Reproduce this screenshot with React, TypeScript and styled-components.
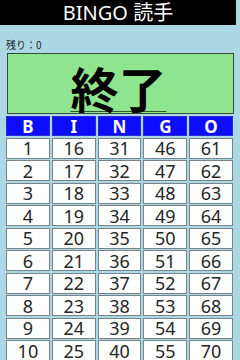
import React from 'react';
import styled, {createGlobalStyle} from 'styled-components';

const GlobalStyle = createGlobalStyle`
  html, body {
    margin: 0;
    padding: 0;
    background: #acd8e6;
  }
  body {
    font-family: 'Noto Sans', 'Noto Sans CJK JP', sans-serif;
    width: 240px;
    height: 360px;
    overflow: hidden;
  }
`;

const Page = styled.div`
  display: flex;
  flex-direction: column;
`;

const TitleBar = styled.h1`
  margin: 0 4px 0 0;
  height: 25px;
  background: #000;
  color: #fff;
  font-family: 'Noto Sans', 'Noto Sans CJK JP', sans-serif;
  font-weight: normal;
  font-size: 20px;
  line-height: 25px;
  text-align: center;
`;

const Remaining = styled.div`
  margin: 12px 0 0 6px;
  height: 15px;
  font-family: 'Noto Sans CJK JP', sans-serif;
  font-size: 10px;
  line-height: 15px;
  color: #222;
`;

const StatusBox = styled.div`
  margin: 1px 6px 0 7px;
  height: 59px;
  background: #8fe48f;
  border: 1px solid #3c4a3c;
  display: flex;
  justify-content: center;
  align-items: flex-end;
  overflow: hidden;
`;

const StatusText = styled.span`
  font-family: 'Noto Sans CJK JP', sans-serif;
  font-weight: bold;
  font-size: 48px;
  line-height: 52px;
  color: #000;
  margin-left: -4px;
  text-decoration: underline;
  text-decoration-color: #2e5a2e;
  text-decoration-thickness: 1px;
  text-underline-offset: 3px;
`;

const Board = styled.div`
  margin: 2px 7px 0 6px;
  display: grid;
  grid-template-columns: repeat(5, 1fr);
  column-gap: 2px;
  row-gap: 1.5px;
`;

const Cell = styled.div<{head?: boolean}>`
  height: ${({head}) => (head ? '20px' : '21px')};
  box-sizing: border-box;
  display: flex;
  align-items: center;
  justify-content: center;
  background: ${({head}) => (head ? '#0c0cff' : '#fff')};
  border: 1px solid ${({head}) => (head ? '#2a2ad8' : '#7a8488')};
  color: ${({head}) => (head ? '#fff' : '#262626')};
  font-family: 'Noto Sans', sans-serif;
  font-size: ${({head}) => (head ? '17px' : '18px')};
  font-weight: ${({head}) => (head ? 'bold' : 'normal')};
  line-height: 1;
`;

const letters = ['B', 'I', 'N', 'G', 'O'];
const rows = Array.from({length: 10}, (_, r) =>
  letters.map((_, c) => r + 1 + c * 15),
);

export default function App() {
  return (
    <Page>
      <GlobalStyle />
      <TitleBar>BINGO 読手</TitleBar>
      <Remaining>残り：0</Remaining>
      <StatusBox>
        <StatusText>終了</StatusText>
      </StatusBox>
      <Board>
        {letters.map((l) => (
          <Cell key={l} head>
            {l}
          </Cell>
        ))}
        {rows.flat().map((n) => (
          <Cell key={n}>{n}</Cell>
        ))}
      </Board>
    </Page>
  );
}
